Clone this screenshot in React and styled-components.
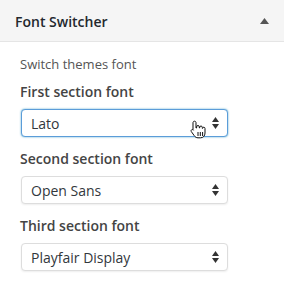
import React from "react";
import styled, { createGlobalStyle } from "styled-components";

const GlobalStyle = createGlobalStyle`
  html, body {
    margin: 0;
    padding: 0;
    background: #fff;
  }
  body {
    font-family: "Open Sans", "Liberation Sans", sans-serif;
    -webkit-font-smoothing: antialiased;
  }
`;

const sections = [
  { label: "First section font", value: "Lato", focused: true },
  { label: "Second section font", value: "Open Sans" },
  { label: "Third section font", value: "Playfair Display" },
];

const App = () => {
  return (
    <>
      <GlobalStyle />
      <Widget>
        <WidgetHeader>
          <WidgetTitle>Font Switcher</WidgetTitle>
          <Toggle />
        </WidgetHeader>
        <WidgetBody>
          <Description>Switch themes font</Description>
          {sections.map((section) => (
            <Field key={section.label}>
              <FieldLabel>{section.label}</FieldLabel>
              <SelectBox $focused={section.focused}>
                <span>{section.value}</span>
                <Arrows />
                {section.focused && <Pointer />}
              </SelectBox>
            </Field>
          ))}
        </WidgetBody>
      </Widget>
    </>
  );
};

const Toggle = () => (
  <svg width="9" height="6" viewBox="0 0 9 6">
    <path d="M4.5 0 L9 6 L0 6 Z" fill="#555" />
  </svg>
);

const Arrows = () => (
  <ArrowIcon width="7" height="12" viewBox="0 0 7 12">
    <path d="M3.5 0 L7 5 L0 5 Z" fill="#333" />
    <path d="M0 7 L7 7 L3.5 12 Z" fill="#333" />
  </ArrowIcon>
);

const Pointer = () => (
  <PointerIcon width="16" height="19" viewBox="0 0 16 19">
    <path
      d="M4.5 1.2 C5.4 1.2 6 1.8 6 2.7 L6 8 L6.6 8 L6.6 6.9 C6.6 6 7.2 5.5 8 5.5 C8.8 5.5 9.3 6 9.3 6.9 L9.3 8 L9.7 8 L9.7 7.3 C9.7 6.5 10.3 6 11 6 C11.7 6 12.3 6.5 12.3 7.3 L12.3 8.4 L12.6 8.4 C12.6 7.7 13.2 7.2 13.8 7.2 C14.5 7.2 15 7.7 15 8.5 L15 13 C15 15.8 13.3 17.8 10.6 17.8 L8 17.8 C6.2 17.8 5.2 17 4.2 15.6 L1.4 11.7 C0.9 11 1 10.2 1.6 9.8 C2.2 9.4 3 9.6 3.4 10.2 L3 9.6 L3 2.7 C3 1.8 3.6 1.2 4.5 1.2 Z"
      fill="#fff"
      stroke="#111"
      strokeWidth="1"
      strokeLinejoin="round"
    />
    <path d="M8 12 L8 16 M10.3 12 L10.3 16 M12.6 12 L12.6 16" stroke="#111" strokeWidth="1" />
  </PointerIcon>
);

const Widget = styled.div`
  width: 284px;
  height: 296px;
  background: #fff;
`;

const WidgetHeader = styled.div`
  height: 42px;
  box-sizing: border-box;
  display: flex;
  align-items: center;
  justify-content: space-between;
  padding: 1px 15px 0 15px;
  background: #f5f5f5;
  border-bottom: 1px solid #e5e5e5;
`;

const WidgetTitle = styled.h3`
  margin: 0;
  font-size: 14px;
  font-weight: 600;
  color: #23282d;
`;

const WidgetBody = styled.div`
  padding: 13px 20px 0 20px;
`;

const Description = styled.p`
  margin: 0 0 9px 0;
  font-size: 13px;
  line-height: 18px;
  color: #555;
`;

const Field = styled.div`
  margin-bottom: 12px;
`;

const FieldLabel = styled.label`
  display: block;
  font-size: 14px;
  font-weight: 600;
  line-height: 19px;
  color: #444;
  margin-bottom: 8px;
`;

const SelectBox = styled.div`
  position: relative;
  width: 207px;
  height: 28px;
  margin-left: 1px;
  box-sizing: border-box;
  display: flex;
  align-items: center;
  justify-content: space-between;
  padding: 0 8px 0 9px;
  border-radius: 4px;
  font-size: 14px;
  color: #32373c;
  background: #fff;
  border: 1px solid ${(p) => (p.$focused ? "#5b9dd9" : "#ddd")};
  box-shadow: ${(p) =>
    p.$focused ? "0 0 2px rgba(30, 140, 190, 0.8)" : "0 1px 2px rgba(0,0,0,0.07)"};
`;

const ArrowIcon = styled.svg`
  flex-shrink: 0;
`;

const PointerIcon = styled.svg`
  position: absolute;
  left: 168px;
  top: 10px;
`;

export default App;
